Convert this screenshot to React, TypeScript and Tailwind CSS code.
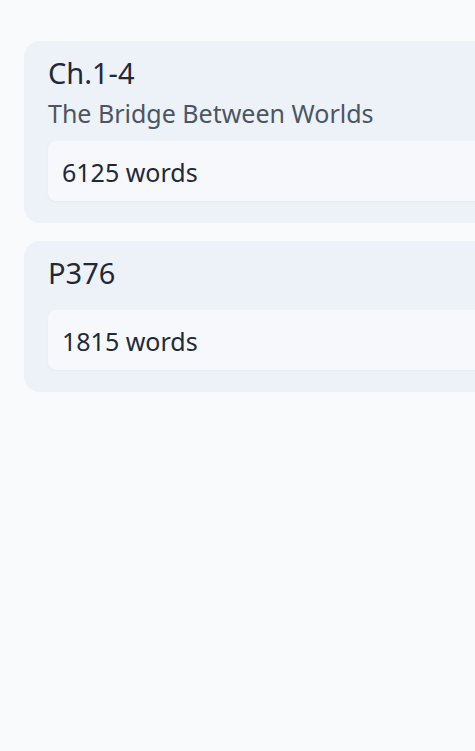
import React from 'react';

type Chapter = {
  id: string;
  title: string;
  subtitle?: string;
  words: number;
};

const chapters: Chapter[] = [
  { id: 'c1', title: 'Ch.1-4', subtitle: 'The Bridge Between Worlds', words: 6125 },
  { id: 'c2', title: 'P376', words: 1815 },
];

const WordCount = ({ words, className }: { words: number; className: string }) => (
  <div
    className={`${className} rounded-lg bg-[#f6f8fc] px-[14px] pt-[17px] pb-[15px] text-[25px] leading-[28px] text-[#1f2937] shadow-[0_1px_2px_rgba(15,23,42,0.04)]`}
  >
    {words} words
  </div>
);

const ChapterCard = ({ chapter }: { chapter: Chapter }) => (
  <div className="rounded-2xl bg-[#edf2f8] px-6 pt-[14px] pb-[22px]">
    <h2 className="text-[29px] leading-[36px] text-[#1f2937]">{chapter.title}</h2>
    {chapter.subtitle ? (
      <>
        <p className="mt-[6px] text-[25px] leading-[32px] text-[#4b5563]">{chapter.subtitle}</p>
        <WordCount words={chapter.words} className="mt-3" />
      </>
    ) : (
      <WordCount words={chapter.words} className="mt-[19px]" />
    )}
  </div>
);

export default function App() {
  return (
    <div className="min-h-screen overflow-hidden bg-[#f8fafc] font-['Noto_Sans',sans-serif]">
      <div className="flex w-[620px] flex-col gap-[18px] pl-6 pt-[41px]">
        {chapters.map((chapter) => (
          <ChapterCard key={chapter.id} chapter={chapter} />
        ))}
      </div>
    </div>
  );
}
